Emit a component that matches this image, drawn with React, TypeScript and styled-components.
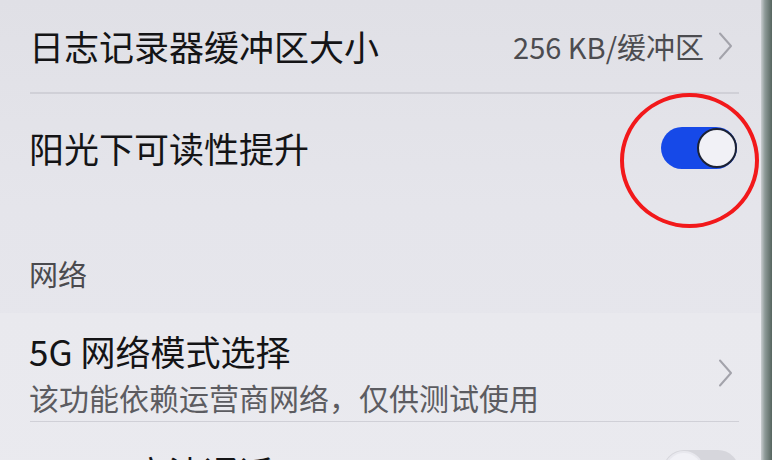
import React from 'react';
import { styled, createGlobalStyle } from 'styled-components';

const GlobalStyle = createGlobalStyle`
  html, body {
    margin: 0;
    padding: 0;
    width: 772px;
    height: 460px;
    overflow: hidden;
    background: #e4e4ea;
  }
  * { box-sizing: border-box; }
`;

const Page = styled.div`
  display: flex;
  width: 772px;
  height: 460px;
  overflow: hidden;
  font-family: "Noto Sans CJK SC", "Noto Sans", sans-serif;
`;

const Screen = styled.div`
  position: relative;
  flex: 1;
  display: flex;
  flex-direction: column;
  overflow: hidden;
  background: linear-gradient(180deg, #e0e0e6 0%, #e5e5eb 45%, #e7e7ed 100%);

  & > * {
    flex-shrink: 0;
  }
`;

const Bezel = styled.div`
  width: 11px;
  background: linear-gradient(90deg, #c9cdd0 0%, #8e9a98 35%, #56655f 100%);
`;

const Row = styled.div<{ $h: number }>`
  display: flex;
  align-items: center;
  height: ${(p) => p.$h}px;
  padding: 0 28px 0 29px;
`;

const Title = styled.div`
  flex: 1;
  font-size: 35px;
  line-height: 44px;
  color: #141416;
  white-space: nowrap;
`;

const Value = styled.span`
  font-size: 29px;
  color: #4c4c50;
  margin-right: 14px;
`;

const Divider = styled.div`
  height: 1.5px;
  margin: 0 22px 0 30px;
  background: #d0d0d7;
  flex-shrink: 0;
`;

const SectionHeader = styled.div`
  margin-top: 50px;
  padding-left: 29px;
  font-size: 29px;
  line-height: 40px;
  color: #4a4a4e;
`;

const Card = styled.div`
  margin-top: 20px;
  display: flex;
  flex-direction: column;
  background: linear-gradient(180deg, #e9e9ee 0%, #eaeaef 100%);
  height: 200px;
`;

const TwoLineRow = styled.div`
  display: flex;
  align-items: center;
  padding: 16px 28px 4px 29px;
`;

const TextCol = styled.div`
  flex: 1;
  display: flex;
  flex-direction: column;
  gap: 4px;
`;

const Sub = styled.div`
  font-size: 30px;
  line-height: 40px;
  color: #5c5c61;
  white-space: nowrap;
`;

const Switch = styled.div<{ $on: boolean }>`
  position: relative;
  width: 76px;
  height: 42px;
  border-radius: 21px;
  background: ${(p) => (p.$on ? '#1649e8' : '#d6d6dc')};
  flex-shrink: 0;
`;

const Knob = styled.div<{ $on: boolean }>`
  position: absolute;
  top: 1px;
  ${(p) => (p.$on ? 'right: 0;' : 'left: 1px;')}
  width: 40px;
  height: 40px;
  border-radius: 50%;
  background: #f1f1f6;
  border: 2px solid ${(p) => (p.$on ? '#1c2234' : '#e8e8ee')};
`;

const Marker = styled.div`
  position: absolute;
  left: 620px;
  top: 93px;
  width: 139px;
  height: 135px;
  border: 4px solid #f2191b;
  border-radius: 50%;
`;

const BottomRow = styled.div`
  display: flex;
  align-items: flex-start;
  padding: 28px 22px 0 29px;
`;

const Chevron = () => (
  <svg width="15" height="28" viewBox="0 0 15 28" fill="none">
    <polyline points="2,1.5 13,14 2,26.5" stroke="#a3a3ab" strokeWidth="2" strokeLinecap="round" strokeLinejoin="round" />
  </svg>
);

export default function App() {
  return (
    <Page>
      <GlobalStyle />
      <Screen>
        <Row $h={92}>
          <Title>日志记录器缓冲区大小</Title>
          <Value>256 KB/缓冲区</Value>
          <Chevron />
        </Row>
        <Divider />
        <Row $h={109} style={{ paddingRight: 24 }}>
          <Title>阳光下可读性提升</Title>
          <Switch $on>
            <Knob $on />
          </Switch>
        </Row>
        <SectionHeader>网络</SectionHeader>
        <Card>
          <TwoLineRow>
            <TextCol>
              <Title>5G 网络模式选择</Title>
              <Sub>该功能依赖运营商网络，仅供测试使用</Sub>
            </TextCol>
            <Chevron />
          </TwoLineRow>
          <Divider />
          <BottomRow>
            <Title>VoLTE 高清通话</Title>
            <Switch $on={false}>
              <Knob $on={false} />
            </Switch>
          </BottomRow>
        </Card>
        <Marker />
      </Screen>
      <Bezel />
    </Page>
  );
}
